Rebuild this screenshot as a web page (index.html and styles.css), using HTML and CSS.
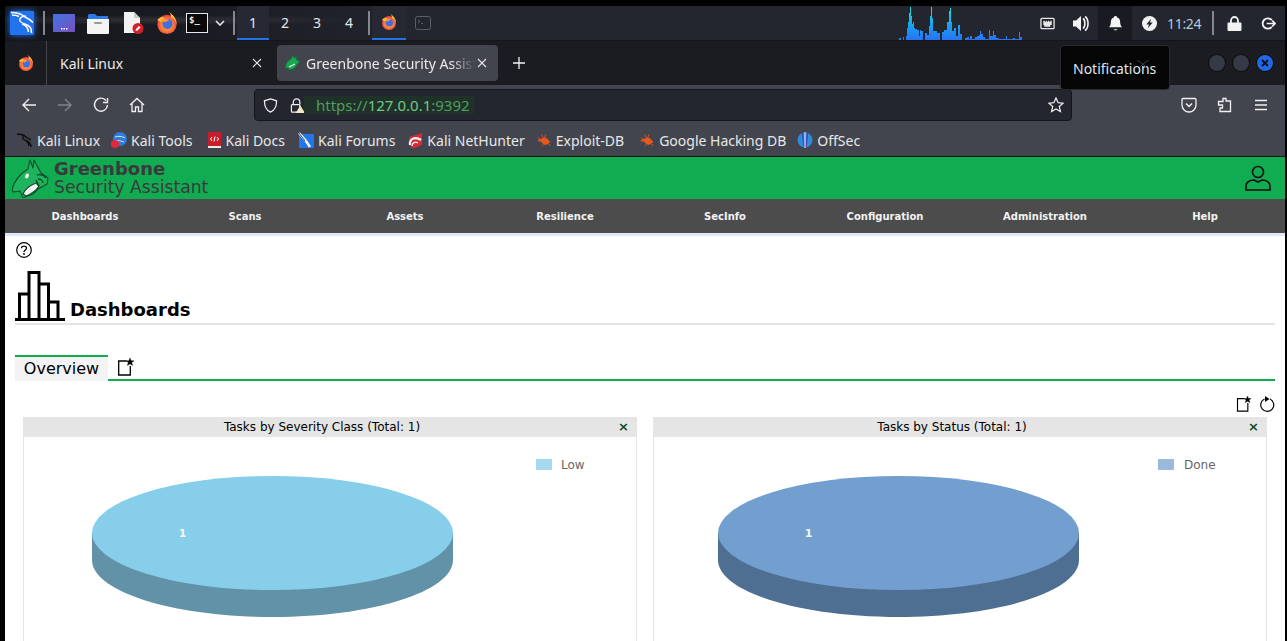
FILE: index.html
```html
<!DOCTYPE html>
<html lang="en">
<head>
  <meta charset="UTF-8">
  <meta name="viewport" content="width=device-width, initial-scale=1.0">
  <title>Greenbone Security Assistant</title>
  <link rel="stylesheet" href="styles.css">
</head>
<body>
  <!-- shared icons -->
  <svg class="sprite" width="0" height="0">
    <defs>
      <radialGradient id="foxBody" cx="0.5" cy="0.55" r="0.6">
        <stop offset="0.45" stop-color="#ff8a2e"/>
        <stop offset="1" stop-color="#e8265a"/>
      </radialGradient>
      <linearGradient id="foxFlame" x1="0.8" y1="0" x2="0.3" y2="1">
        <stop offset="0" stop-color="#ffe03b"/>
        <stop offset="1" stop-color="#ff8a1e"/>
      </linearGradient>
      <linearGradient id="cpuBars" gradientUnits="userSpaceOnUse" x1="0" y1="0" x2="0" y2="34">
        <stop offset="0" stop-color="#1fe8d8"/>
        <stop offset="0.55" stop-color="#17a5ee"/>
        <stop offset="1" stop-color="#2a72f4"/>
      </linearGradient>
      <symbol id="firefox" viewBox="0 0 24 24">
        <circle cx="12" cy="13.500" r="10.500" fill="url(#foxBody)"/>
        <path d="M14 0c5 3 9 8 8.500 14-1-4-3-7-6.500-8 1-2 0-4-2-6z" fill="url(#foxFlame)"/>
        <path d="M1.500 9c1-2 3-3.500 6-3.500l3 3-5 2.500z" fill="#ffc02e"/>
        <circle cx="12.500" cy="13" r="5.500" fill="#3f6fe8"/>
        <path d="M5 8.500c3-2 7-1.500 10 1-2 0-4 .5-5 2z" fill="#ff9a26"/>
      </symbol>
      <symbol id="newDash" viewBox="0 0 16 18">
        <path d="M8.500 3H.7v14h11.600V8" fill="none" stroke="#000" stroke-width="1.300"/>
        <path d="M12 0l1.100 2.800h2.900l-2.300 1.800.9 2.900L12 5.800 9.400 7.500l.9-2.900L8 2.800h2.900z" fill="#000" stroke="#000" stroke-width=".4"/>
      </symbol>
      <symbol id="bug" viewBox="0 0 18 16">
        <path d="M1 5l5 2c1-2 4-3 6-1l4 4c-1 1-2 3-4 3-3 1-5-1-6-3L1 9l3-1.500z" fill="#e8581c"/>
        <path d="M6 2l2 3M11 2l-1 3M14 13l2 1M8 13l-1 2" stroke="#e8581c" fill="none"/>
      </symbol>
    </defs>
  </svg>

  <div class="desktop">
    <!-- xfce panel -->
    <div class="panel">
      <svg class="kali-logo" viewBox="0 0 24 24">
        <rect width="24" height="24" rx="1" fill="#2273f0"/>
        <path d="M1 1.500c5 0 10 1 13 4 2 1 5 2 9 6M16 5c-4 0-7 2-6 5 2 4 9 2 11 8l.5 4M12 13c4 1 6 3 6.500 8M2 4c3 0 5 .5 7 1.500" fill="none" stroke="#fff" stroke-width="1.500"/>
      </svg>
      <span class="panel-sep sep-first"></span>
      <svg class="launch launch-desk" viewBox="0 0 22 18">
        <defs>
          <linearGradient id="deskGrad" x1="0" y1="0" x2="1" y2="1">
            <stop offset="0" stop-color="#3f74e4"/>
            <stop offset="1" stop-color="#7a4fc0"/>
          </linearGradient>
        </defs>
        <rect width="22" height="18" rx="1" fill="url(#deskGrad)"/>
        <path d="M8 14h1.500v1.500H8zM10.500 14H12v1.500h-1.500zM13 14h1.500v1.500H13z" fill="#fff"/>
      </svg>
      <svg class="launch launch-folder" viewBox="0 0 22 21">
        <path d="M1 3c0-1 .5-2 1-2h6l2 2h11v3H1z" fill="#2a7ae8"/>
        <path d="M0 6h22v14a1 1 0 0 1-1 1H1a1 1 0 0 1-1-1z" fill="#f4f4f4"/>
        <rect x="7" y="9" width="8" height="2" rx="1" fill="#9a9a9a"/>
      </svg>
      <svg class="launch launch-doc" viewBox="0 0 21 22">
        <path d="M1 0h10l6 6v15H1z" fill="#f2f2f2"/>
        <path d="M11 0l6 6h-6z" fill="#c8c8c8"/>
        <circle cx="15" cy="16.500" r="5.500" fill="#d3202a"/>
        <path d="M12.500 19l.5-2 3-3 1.500 1.500-3 3z" fill="#fff"/>
      </svg>
      <svg class="launch launch-fox"><use href="#firefox"/></svg>
      <div class="launch-term">$_</div>
      <svg class="launch-chevron" viewBox="0 0 10 6"><path d="M1 1l4 4 4-4" fill="none" stroke="#e6e6e6" stroke-width="1.600"/></svg>
      <span class="panel-sep sep-work"></span>
      <div class="workspaces">
        <span class="workspace active">1</span>
        <span class="workspace">2</span>
        <span class="workspace">3</span>
        <span class="workspace">4</span>
      </div>
      <span class="panel-sep sep-win"></span>
      <div class="win-btn active"><svg class="win-icon"><use href="#firefox"/></svg></div>
      <div class="win-btn">
        <svg class="win-term" viewBox="0 0 16 14"><rect x=".5" y=".5" width="15" height="13" rx="2" fill="none" stroke="#5d5f66"/><path d="M3 4l2 1.500L3 7M6 7.500h2" fill="none" stroke="#5d5f66"/></svg>
      </div>

      <div class="panel-spacer"></div>

      <svg class="cpu-graph" viewBox="0 0 126 34">
        <path fill="url(#cpuBars)" d="M0 34V32H2V34H4V31H5V34H7V30H8V22H9V16H10V7H11V1H12V10H13V18H14V16H15V22H16V23H18V24H20V30H21V24H22V25H24V34H26V27H28V29H30V20H31V10H32V1H33V12H34V25H35V25H38V27H41V34H43V26H45V24H48V16H50V5H51V2H52V16H53V25H55V22H57V30H59V19H61V28H63V34H66V32H68V31H70V33H71V30H73V33H76V31H78V30H80V29H81V25H82V28H84V31H86V33H90V24H91V30H94V25H95V29H97V32H100V33H107V30H108V33H114V32H116V33H120V26H121V31H123V34Z"/>
      </svg>
      <div class="tray-cell">
        <svg class="tray-icon" viewBox="0 0 16 13"><path d="M2 1h12a1 1 0 0 1 1 1v9a1 1 0 0 1-1 1H2a1 1 0 0 1-1-1V2a1 1 0 0 1 1-1z" fill="none" stroke="#e8e8e8" stroke-width="1.400"/><path d="M3.500 3.500h1.500v1h1.200v-1h1.200v1h1.200v-1h1.200v1h1.200v-1h1.500V8h-1.500v2h-6.500V8H3.500z" fill="#e8e8e8"/></svg>
      </div>
      <div class="tray-cell">
        <svg class="tray-icon icon-vol" viewBox="0 0 18 16"><path d="M1 5h3l5-4.500v15L4 11H1z" fill="#f2f2f2"/><path d="M11 3c2.500 1.500 2.500 8.500 0 10M13 1c4 2.500 4 11.500 0 14" fill="none" stroke="#f2f2f2" stroke-width="1.600"/></svg>
      </div>
      <div class="tray-cell tray-active">
        <svg class="tray-icon" viewBox="0 0 14 16"><path d="M7 0c1 0 1.500.6 1.500 1.300C11 2 12 4 12 7c0 2 .5 3.500 2 5H0c1.500-1.500 2-3 2-5 0-3 1-5 3.500-5.700C5.500.6 6 0 7 0z" fill="#f4f4f4"/><path d="M4.500 14h5l-2.500 1.500z" fill="#f4f4f4"/></svg>
      </div>
      <div class="tray-cell">
        <svg class="tray-icon" viewBox="0 0 14 14"><circle cx="7" cy="7" r="7" fill="#f2f2f2"/><path d="M8.500 2.500L4 8h2.500l-1 3.500L10 6H7.500z" fill="#23252f"/></svg>
      </div>
      <div class="clock">11:24</div>
      <span class="panel-sep sep-clock"></span>
      <div class="tray-cell">
        <svg class="tray-icon" viewBox="0 0 14 15"><path d="M3.500 7V4.500a3.500 3.500 0 0 1 7 0V7" fill="none" stroke="#f2f2f2" stroke-width="1.800"/><rect x="0" y="6.500" width="14" height="8.500" rx="1" fill="#f2f2f2"/></svg>
      </div>
      <div class="tray-cell">
        <svg class="tray-icon" viewBox="0 0 16 14"><path d="M11.500 3.500A5.500 5.500 0 1 0 11.500 10.500" fill="none" stroke="#f2f2f2" stroke-width="2"/><path d="M6 7h9M12 4l3 3-3 3" fill="none" stroke="#f2f2f2" stroke-width="1.800"/></svg>
      </div>
    </div>

    <!-- firefox -->
    <div class="tabbar">
      <div class="pinned-tab"><svg class="favicon"><use href="#firefox"/></svg></div>
      <div class="tab">
        <span class="tab-title">Kali Linux</span>
        <svg class="tab-close" viewBox="0 0 10 10"><path d="M1 1l8 8M9 1l-8 8" stroke="#e4e4e4" stroke-width="1.100"/></svg>
      </div>
      <div class="tab tab-active">
        <svg class="tab-fav" viewBox="0 0 16 16"><path d="M0 13l2-6 4-3 2-4 1 3 3-2-1 3 4 3-3 2-2 4-5 2-2-2z" fill="#1aa552" stroke="#0e6a35" stroke-width=".5"/><path d="M4 12l6-3" stroke="#dff3e3" stroke-width="1.200"/></svg>
        <span class="tab-title tab-fade">Greenbone Security Assistant</span>
        <svg class="tab-close" viewBox="0 0 10 10"><path d="M1 1l8 8M9 1l-8 8" stroke="#e4e4e4" stroke-width="1.100"/></svg>
      </div>
      <svg class="tab-new" viewBox="0 0 12 12"><path d="M6 0v12M0 6h12" stroke="#f2f2f2" stroke-width="1.300"/></svg>
      <div class="win-controls">
        <span class="win-dot"></span>
        <span class="win-dot"></span>
        <span class="win-dot win-close">
          <svg viewBox="0 0 8 8"><path d="M1 1l6 6M7 1l-6 6" stroke="#0b1226" stroke-width="2"/></svg>
        </span>
      </div>
    </div>

    <div class="navbar">
      <svg class="nav-icon nav-back" viewBox="0 0 16 16"><path d="M15 8H2M8 2L2 8l6 6" fill="none" stroke="#f0f0f0" stroke-width="1.400"/></svg>
      <svg class="nav-icon" viewBox="0 0 16 16"><path d="M1 8h13M8 2l6 6-6 6" fill="none" stroke="#80838a" stroke-width="1.400"/></svg>
      <svg class="nav-icon" viewBox="0 0 16 16"><path d="M13 3.500A6.500 6.500 0 1 0 14.500 8" fill="none" stroke="#f0f0f0" stroke-width="1.400"/><path d="M14.500 1v4.500H10" fill="none" stroke="#f0f0f0" stroke-width="1.400"/></svg>
      <svg class="nav-icon" viewBox="0 0 16 16"><path d="M1 8l7-6.500L15 8M3 6.500V14.500h3.500V10h3v4.500H13V6.500" fill="none" stroke="#f0f0f0" stroke-width="1.300"/></svg>
      <div class="urlbar">
        <svg class="url-shield" viewBox="0 0 16 16"><path d="M8 1l6.500 2c0 6-1.500 10-6.500 12C3 13 1.500 9 1.500 3z" fill="none" stroke="#f0f0f0" stroke-width="1.300"/></svg>
        <svg class="url-lock" viewBox="0 0 16 16"><path d="M3.500 7V4.500a3.500 3.500 0 0 1 7 0V7" fill="none" stroke="#f0f0f0" stroke-width="1.300"/><rect x="1.500" y="7" width="9" height="8" rx="1" fill="none" stroke="#f0f0f0" stroke-width="1.300"/><path d="M11 8l5 8H6z" fill="#f0e9c8"/></svg>
        <div class="url-text"><span class="url-dim">https://</span>127.0.0.1<span class="url-dim">:9392</span></div>
        <svg class="url-star" viewBox="0 0 16 16"><path d="M8 1l2.100 4.700 5 .5-3.800 3.300 1.100 5L8 12l-4.400 2.500 1.100-5L.9 6.200l5-.5z" fill="none" stroke="#f0f0f0" stroke-width="1.200"/></svg>
      </div>
      <svg class="nav-tool tool-pocket" viewBox="0 0 16 16"><path d="M1 2.500A1 1 0 0 1 2 1.500h12a1 1 0 0 1 1 1V8a7 7 0 0 1-14 0z" fill="none" stroke="#f0f0f0" stroke-width="1.300"/><path d="M5 6.500l3 3 3-3" fill="none" stroke="#f0f0f0" stroke-width="1.500"/></svg>
      <svg class="nav-tool" viewBox="0 0 16 16"><path d="M6 1.500h3V4h4.500v10.500H3V11h2.500V8H1.500V4.500H6z" fill="none" stroke="#f0f0f0" stroke-width="1.300"/></svg>
      <svg class="nav-tool" viewBox="0 0 16 16"><path d="M2 3.500h12M2 8h12M2 12.500h12" stroke="#f0f0f0" stroke-width="1.300"/></svg>
    </div>

    <div class="bookmarks">
      <a class="bookmark bm-linux">
        <svg viewBox="0 0 16 16"><path d="M0 2c4 0 7 1 9 3l5 3M8 3C5 4 5 7 8 8c3 1 6 3 6 7M9 9c2 1 3 3 3 5" fill="none" stroke="#0b0b0b" stroke-width="1.300"/></svg>
        Kali Linux
      </a>
      <a class="bookmark bm-tools">
        <svg viewBox="0 0 16 16"><circle cx="9" cy="7" r="7" fill="#2e7bd8"/><path d="M4 5c3-1 7-1 10 1M4 9c3-1 6 0 9 1" stroke="#cfe4fa" fill="none"/><circle cx="4" cy="12" r="4" fill="#e2283a"/></svg>
        Kali Tools
      </a>
      <a class="bookmark bm-docs">
        <svg viewBox="0 0 16 16"><rect x="2" y="0" width="13" height="14" fill="#c91c2a"/><rect x="2" y="14" width="13" height="2" fill="#e8e8e8"/><path d="M6 5L4.500 7 6 9M11 5l1.500 2L11 9M9 4.500L8 9.500" stroke="#fff" fill="none"/></svg>
        Kali Docs
      </a>
      <a class="bookmark bm-forums">
        <svg viewBox="0 0 16 16"><rect x="1" y="2" width="15" height="14" fill="#2277e8"/><path d="M1 1l7 8 4 6" stroke="#f0f0f0" stroke-width="2.500" fill="none"/><path d="M1 1l6 8" stroke="#222" stroke-width=".8" fill="none"/></svg>
        Kali Forums
      </a>
      <a class="bookmark bm-hunter">
        <svg viewBox="0 0 16 16"><path d="M2 5L15 1v12L8 16H4z" fill="#d52b33"/><path d="M3 13c-1-6 5-9 11-5" stroke="#f2f2f2" stroke-width="2.200" fill="none"/><path d="M5 14c0-3 3-5 6-3" stroke="#f2f2f2" stroke-width="1.400" fill="none"/></svg>
        Kali NetHunter
      </a>
      <a class="bookmark bm-exploit"><svg><use href="#bug"/></svg>Exploit-DB</a>
      <a class="bookmark bm-ghdb"><svg><use href="#bug"/></svg>Google Hacking DB</a>
      <a class="bookmark bm-offsec">
        <svg viewBox="0 0 16 16"><circle cx="8" cy="8" r="7.500" fill="#2a8fd8"/><path d="M5.500 1L7 15M10.500 1L9 15" stroke="#4b3fc4" stroke-width="1.500"/><path d="M8 0v16" stroke="#e8e8e8" stroke-width="1"/></svg>
        OffSec
      </a>
    </div>

    <!-- gsa page -->
    <div class="gsa">
      <header class="gsa-header">
        <svg class="gsa-logo" viewBox="0 0 40 40">
          <path d="M1.300 31C3 24 9 16 17 11l2-9 3 8 1-8 7 13 7 5-1 6-9 5-5 5-10 4-3-7-7 1z" fill="#1fb35f" stroke="#0a4f27" stroke-width="1.100" stroke-linejoin="round"/>
          <ellipse cx="16" cy="18" rx="1.800" ry="2.600" transform="rotate(25 16 18)" fill="#f2f2f2"/>
          <path d="M12 36c2-5 8-9 13-11l3 3c-3 5-8 8-13 10z" fill="#f2f2f2" stroke="#0a4f27" stroke-width="1.300"/>
          <path d="M26 17c3-1 7 0 9 3M27 21c3 0 5 2 5 4M25 22l3 6" fill="none" stroke="#0a4f27" stroke-width="1.500"/>
        </svg>
        <div class="gsa-brand">
          <div class="brand-top">Greenbone</div>
          <div class="brand-sub">Security Assistant</div>
        </div>
        <svg class="gsa-user" viewBox="0 0 26 26"><circle cx="13" cy="7" r="5.500" fill="none" stroke="#111" stroke-width="1.600"/><path d="M1 25v-4c0-4 4-6 8-6l4 2 4-2c4 0 8 2 8 6v4z" fill="none" stroke="#111" stroke-width="1.600"/></svg>
      </header>
      <nav class="gsa-menu">
        <span>Dashboards</span>
        <span>Scans</span>
        <span>Assets</span>
        <span>Resilience</span>
        <span>SecInfo</span>
        <span>Configuration</span>
        <span>Administration</span>
        <span>Help</span>
      </nav>

      <div class="gsa-main">
        <svg class="help-icon" viewBox="0 0 16 16"><circle cx="8" cy="8" r="7.300" fill="none" stroke="#000" stroke-width="1.200"/><path d="M5.500 6.300C5.500 3.500 10.500 3.500 10.500 6.300 10.500 8 8 8 8 10" fill="none" stroke="#000" stroke-width="1.300"/><circle cx="8" cy="12" r=".9"/></svg>
        <div class="page-title">
          <svg class="title-icon" viewBox="0 0 50 50">
            <path d="M4.500 48V23h9.500v25M14 48V1.500h10v46.500M24 48V13h9.500v35M33.500 48V31H43v17" fill="none" stroke="#000" stroke-width="3"/>
            <path d="M0 48.500h50" stroke="#000" stroke-width="3"/>
          </svg>
          <h1>Dashboards</h1>
        </div>

        <div class="tabs">
          <div class="tab-overview">Overview</div>
          <svg class="tabs-new"><use href="#newDash"/></svg>
        </div>

        <div class="dash-tools">
          <svg class="dash-tool"><use href="#newDash"/></svg>
          <svg class="dash-tool" viewBox="0 0 16 16"><path d="M5.500 3A6.500 6.500 0 1 0 11 3" fill="none" stroke="#000" stroke-width="1.200"/><path d="M6 0v6L1.500 3z" fill="#000" transform="rotate(180 6 3)"/></svg>
        </div>

        <div class="charts">
          <section class="chart">
            <div class="chart-head">
              <span>Tasks by Severity Class (Total: 1)</span>
              <span class="chart-x">×</span>
            </div>
            <svg class="chart-svg" viewBox="0 0 612 240">
              <rect x="512" y="22" width="16" height="11" fill="#a5d9ef"/>
              <text class="legend" x="537" y="32">Low</text>
              <path d="M68 96v27c0 31.500 81 57 180.500 57s180.500-25.500 180.500-57V96z" fill="#6192a8"/>
              <ellipse cx="248.500" cy="96" rx="180.500" ry="57" fill="#87ceeb"/>
              <text class="pie-label" x="158.500" y="100">1</text>
            </svg>
          </section>
          <section class="chart">
            <div class="chart-head">
              <span>Tasks by Status (Total: 1)</span>
              <span class="chart-x">×</span>
            </div>
            <svg class="chart-svg" viewBox="0 0 612 240">
              <rect x="504" y="22" width="16" height="11" fill="#9ab9dd"/>
              <text class="legend" x="530" y="32">Done</text>
              <path d="M64 96v27c0 31.500 81 57 180.500 57s180.500-25.500 180.500-57V96z" fill="#4f6f92"/>
              <ellipse cx="244.500" cy="96" rx="180.500" ry="57" fill="#729fcf"/>
              <text class="pie-label" x="154.500" y="100">1</text>
            </svg>
          </section>
        </div>
      </div>
    </div>

    <div class="tooltip">
      <svg class="tooltip-x" viewBox="0 0 12 7"><path d="M0 0l6 4 6-4M3 7l3-3 3 3" fill="none" stroke="#3a3a3d"/></svg>
      Notifications
    </div>
  </div>
</body>
</html>
```

FILE: styles.css
```css
/* General */
html, body {
  margin: 0;
  height: 100%;
  overflow: hidden;
  background: #000;
}

.sprite {
  position: absolute;
}

.desktop {
  position: relative;
  width: 1280px;
  height: 635px;
  margin: 6px 0 0 5px;
  overflow: hidden;
  font-family: "Noto Sans", sans-serif;
  color: #e8e8e8;
}

/* Panel */
.panel {
  display: flex;
  align-items: center;
  height: 35px;
  box-sizing: border-box;
  border-bottom: 1px solid #14151a;
  background:
    radial-gradient(ellipse 210px 5px at 150px 14px, rgba(255, 255, 255, 0.1), transparent),
    linear-gradient(90deg, #15161b, #1b1c23 200px, #23252f 420px);
}

.kali-logo {
  width: 24px;
  height: 24px;
  margin-left: 5px;
  filter: drop-shadow(0 0 3px #2273f0);
}

.panel-sep {
  width: 2px;
  height: 24px;
  background: #85878d;
}

.sep-first { margin-left: 9px; }
.sep-work { margin-left: 8px; }
.sep-win { margin-left: 3px; }
.sep-clock { margin-right: 3px; }

.launch-desk { width: 22px; height: 18px; margin-left: 8px; }
.launch-folder { width: 22px; height: 21px; margin-left: 12px; }
.launch-doc { width: 21px; height: 22px; margin-left: 14px; }
.launch-fox { width: 22px; height: 22px; margin-left: 12px; }

.launch-term {
  width: 22px;
  height: 20px;
  margin-left: 8px;
  box-sizing: border-box;
  border: 1px solid #e8e8e8;
  background: #0a0a0a;
  color: #f0f0f0;
  font: bold 9px/13px "DejaVu Sans Mono", monospace;
  padding-left: 2px;
}

.launch-chevron {
  width: 10px;
  height: 6px;
  margin-left: 7px;
}

.workspaces {
  display: flex;
  height: 100%;
  margin-left: 2px;
}

.workspace {
  width: 32px;
  line-height: 34px;
  text-align: center;
  font-size: 14px;
  color: #e6e6e6;
  box-sizing: border-box;
}

.workspace.active {
  background: #262833;
  border-bottom: 2px solid #2273e8;
}

.win-btn {
  display: flex;
  align-items: center;
  justify-content: center;
  width: 34px;
  height: 100%;
  box-sizing: border-box;
}

.win-btn.active {
  margin-left: 2px;
  background: #262833;
  border-bottom: 2px solid #2273e8;
}

.win-icon {
  width: 16px;
  height: 16px;
}

.win-term {
  width: 16px;
  height: 14px;
}

.panel-spacer {
  flex: 1;
}

.cpu-graph {
  width: 126px;
  height: 34px;
  margin-right: 5px;
}

.tray-cell {
  display: flex;
  align-items: center;
  justify-content: center;
  width: 34px;
  height: 100%;
}

.tray-active {
  background: #1a1b22;
}

.tray-icon {
  width: 15px;
  height: 15px;
}

.icon-vol {
  width: 18px;
  height: 17px;
}

.clock {
  width: 45px;
  padding-left: 1px;
  font-size: 14px;
  letter-spacing: -0.3px;
  color: #b8c8d8;
}

/* Tabs */
.tabbar {
  display: flex;
  align-items: center;
  height: 44px;
  background: #1b1c21;
}

.pinned-tab {
  display: flex;
  align-items: center;
  justify-content: center;
  width: 42px;
  height: 100%;
  box-sizing: border-box;
  border-right: 1px solid #45474d;
}

.favicon {
  width: 16px;
  height: 16px;
  margin-left: 1px;
}

.tab {
  display: flex;
  align-items: center;
  width: 226px;
  height: 36px;
  margin-right: 4px;
  padding: 0 11px 0 13px;
  box-sizing: border-box;
}

.tab-active {
  width: 221px;
  margin-right: 0;
  padding-left: 8px;
  background: #42454e;
  border-radius: 4px;
}

.tab-title {
  flex: 1;
  font-size: 14px;
  white-space: nowrap;
  overflow: hidden;
  color: #eaeaea;
}

.tab-fade {
  -webkit-mask-image: linear-gradient(90deg, #000 85%, transparent 99%);
  mask-image: linear-gradient(90deg, #000 85%, transparent 99%);
}

.tab-close {
  width: 10px;
  height: 10px;
  flex: none;
}

.tab-fav {
  width: 16px;
  height: 16px;
  margin-right: 5px;
  flex: none;
}

.tab-new {
  width: 12px;
  height: 12px;
  margin-left: 15px;
}

.win-controls {
  display: flex;
  gap: 8px;
  margin-left: auto;
  margin-right: 12px;
}

.win-dot {
  display: flex;
  align-items: center;
  justify-content: center;
  width: 16px;
  height: 16px;
  border-radius: 50%;
  background: #363a47;
  box-shadow: 0 0 0 1px #0c0d10;
}

.win-close {
  background: #2068e4;
}

.win-close svg {
  width: 8px;
  height: 8px;
}

/* Toolbar */
.navbar {
  display: flex;
  align-items: center;
  height: 37px;
  padding-top: 3px;
  box-sizing: border-box;
  background: #42454e;
}

.navbar > * {
  flex: none;
}

.nav-icon {
  width: 16px;
  height: 16px;
  margin-right: 20px;
}

.nav-back {
  margin-left: 16px;
}

.urlbar {
  display: flex;
  align-items: center;
  width: 818px;
  height: 32px;
  margin-left: 89px;
  box-sizing: border-box;
  border: 1px solid #15161a;
  border-radius: 4px;
  background: #23252f;
}

.url-shield {
  width: 15px;
  height: 15px;
  margin-left: 8px;
}

.url-lock {
  width: 15px;
  height: 15px;
  margin-left: 12px;
}

.url-text {
  margin-left: -1px;
  padding: 0 4px 0 12px;
  background: #1f3129;
  color: #72c985;
  font-size: 15px;
  line-height: 18px;
}

.url-dim {
  color: #4f9e5f;
}

.url-star {
  width: 16px;
  height: 16px;
  margin-left: auto;
  margin-right: 7px;
}

.nav-tool {
  width: 16px;
  height: 16px;
  margin-right: 20px;
}

.tool-pocket {
  margin-left: 109px;
}

/* Bookmarks */
.bookmarks {
  display: flex;
  align-items: center;
  height: 35px;
  padding-top: 2px;
  box-sizing: border-box;
  background: #42454e;
  border-bottom: 1px solid #121316;
  font-size: 14px;
}

.bookmark {
  display: flex;
  align-items: center;
  gap: 4px;
  color: #e8e8e8;
  white-space: nowrap;
}

.bookmark svg {
  width: 16px;
  height: 16px;
  flex: none;
}

.bm-linux { margin-left: 12px; }
.bm-tools { margin-left: 11px; }
.bm-docs { margin-left: 13px; }
.bm-forums { margin-left: 13px; }
.bm-hunter { margin-left: 12px; }
.bm-exploit { margin-left: 11px; }
.bm-ghdb { margin-left: 15px; }
.bm-offsec { margin-left: 11px; }

/* GSA page */
.gsa {
  height: 484px;
  background: #fff;
  color: #000;
  font-family: "DejaVu Sans", sans-serif;
}

.gsa-header {
  display: flex;
  align-items: center;
  height: 42px;
  background: #11ab51;
}

.gsa-logo {
  width: 40px;
  height: 40px;
  margin-left: 6px;
  flex: none;
}

.gsa-brand {
  margin-left: 3px;
  color: #3a3a3c;
}

.brand-top {
  font-size: 18px;
  font-weight: bold;
  line-height: 18px;
}

.brand-sub {
  font-size: 17.200px;
  line-height: 19px;
}

.gsa-user {
  width: 26px;
  height: 26px;
  margin-left: auto;
  margin-right: 14px;
}

.gsa-menu {
  display: grid;
  grid-template-columns: repeat(8, 160px);
  height: 34px;
  background: #4c4c4c;
  border-bottom: 3px solid #dfe9fb;
  color: #f2f2f2;
  font-size: 10px;
  font-weight: bold;
  line-height: 36px;
  text-align: center;
}

.gsa-main {
  padding: 6px 10px 0;
}

.help-icon {
  display: block;
  width: 16px;
  height: 16px;
  margin-left: 1px;
}

.page-title {
  display: flex;
  align-items: flex-end;
  height: 53px;
  margin-top: 12px;
  border-bottom: 2px solid #e5e5e5;
}

.title-icon {
  width: 50px;
  height: 50px;
  margin-bottom: 2px;
}

.page-title h1 {
  margin: 0 0 1px 5px;
  font-size: 18px;
  line-height: 24px;
}

.tabs {
  display: flex;
  align-items: flex-start;
  height: 26px;
  margin-top: 30px;
  box-sizing: border-box;
  border-bottom: 2px solid #11ab51;
}

.tab-overview {
  width: 93px;
  height: 26px;
  box-sizing: border-box;
  border-top: 2px solid #11ab51;
  background: #f3f3f3;
  font-size: 16px;
  line-height: 24px;
  text-align: center;
}

.tabs-new {
  width: 16px;
  height: 18px;
  margin: 3px 0 0 10px;
}

.dash-tools {
  display: flex;
  justify-content: flex-end;
  gap: 7px;
  height: 16px;
  margin-top: 15px;
}

.dash-tool {
  width: 16px;
  height: 16px;
}

.charts {
  display: grid;
  grid-template-columns: 614px 614px;
  gap: 16px;
  margin: 5px 8px 0;
}

.chart {
  height: 300px;
  box-sizing: border-box;
  border: 1px solid #e5e5e5;
}

.chart-head {
  display: flex;
  align-items: center;
  justify-content: center;
  position: relative;
  height: 20px;
  margin: -1px -1px 0;
  padding-right: 16px;
  background: #e5e5e5;
  font-size: 12px;
}

.chart-x {
  position: absolute;
  right: 8px;
  top: 0;
  color: #0a4a24;
  font-size: 13px;
  font-weight: bold;
  line-height: 20px;
}

.chart-svg {
  display: block;
  width: 612px;
  height: 240px;
}

.legend {
  fill: #666;
  font-size: 12px;
}

.pie-label {
  fill: #f4f4f4;
  font-size: 11px;
  font-weight: bold;
  text-anchor: middle;
}

/* Tooltip */
.tooltip {
  position: absolute;
  left: 1055px;
  top: 39px;
  width: 110px;
  height: 45px;
  box-sizing: border-box;
  padding-left: 12px;
  border: 1px solid #2a2a2e;
  border-radius: 4px;
  background: #050505;
  color: #dfe6ee;
  font-size: 14px;
  line-height: 45px;
}

.tooltip-x {
  position: absolute;
  left: 76px;
  top: 14px;
  width: 12px;
  height: 7px;
}
```
